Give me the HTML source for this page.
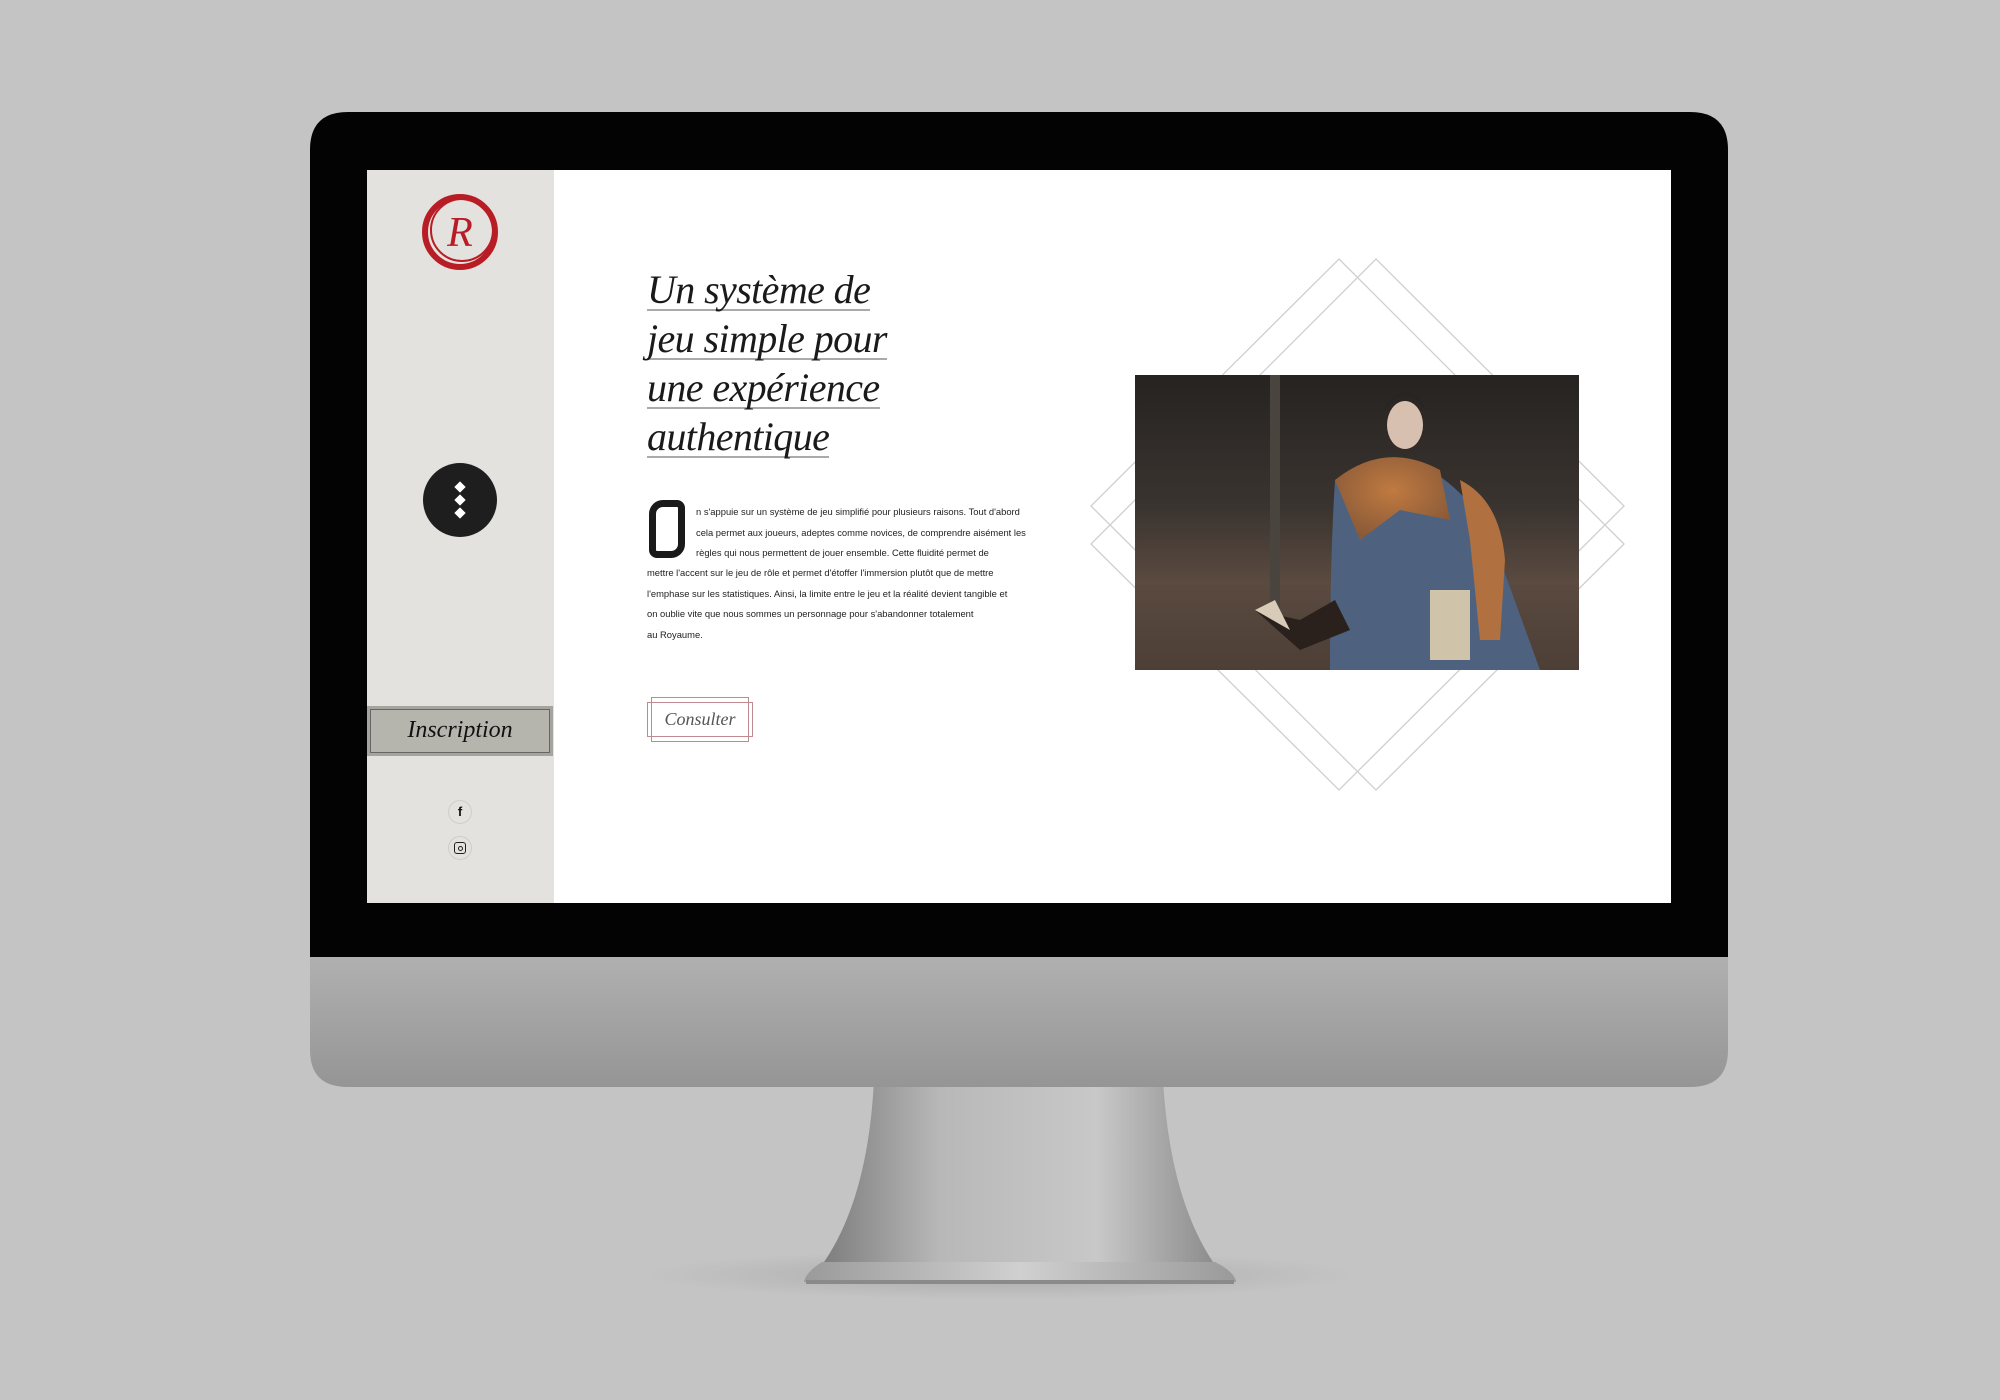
<!DOCTYPE html>
<html><head><meta charset="utf-8"><style>
*{margin:0;padding:0;box-sizing:border-box}
body{width:2000px;height:1400px;background:#c4c4c4;position:relative;overflow:hidden;font-family:"Liberation Sans",sans-serif}
.abs{position:absolute}
.h1{left:647px;top:270px;font-family:"Liberation Serif",serif;font-style:italic;font-size:40px;line-height:40px;color:#1a1a1a;letter-spacing:-0.6px}
.h1 span{display:inline-block;border-bottom:2px solid #aaa;line-height:38px;margin-bottom:8px}
.p{left:647px;top:560px;width:400px;font-size:9.4px;line-height:20.5px;color:#222}
</style></head><body>
<div class="abs" style="left:640px;top:1250px;width:720px;height:50px;border-radius:50%;background:radial-gradient(ellipse at center,rgba(140,140,140,.45),rgba(196,196,196,0) 70%)"></div>
<svg class="abs" style="left:0;top:0" width="2000" height="1400">
<defs>
<linearGradient id="ng" x1="0" x2="1"><stop offset="0" stop-color="#7d7d7d"/><stop offset=".3" stop-color="#b8b8b8"/><stop offset=".7" stop-color="#c8c8c8"/><stop offset="1" stop-color="#8c8c8c"/></linearGradient>
<linearGradient id="bg2" x1="0" x2="1"><stop offset="0" stop-color="#9a9a9a"/><stop offset=".5" stop-color="#d0d0d0"/><stop offset="1" stop-color="#9a9a9a"/></linearGradient>
<linearGradient id="chin" y1="0" y2="1" x1="0" x2="0"><stop offset="0" stop-color="#b0b0b0"/><stop offset="1" stop-color="#959595"/></linearGradient>
</defs>
<path d="M874 1080 L1163 1080 Q1170 1200 1215 1265 L822 1265 Q868 1200 874 1080Z" fill="url(#ng)"/>
<path d="M822 1262 L1215 1262 Q1235 1272 1236 1282 L804 1282 Q806 1272 822 1262Z" fill="url(#bg2)"/>
<rect x="806" y="1280" width="428" height="4" fill="#8a8a8a"/>
<path d="M348 112 H1690 Q1728 112 1728 150 V957 H310 V150 Q310 112 348 112Z" fill="#030303"/>
<path d="M310 957 H1728 V1050 Q1728 1087 1690 1087 H348 Q310 1087 310 1050Z" fill="url(#chin)"/>
</svg>
<div class="abs" style="left:367px;top:170px;width:1304px;height:733px;background:#fff;overflow:hidden">
  <div class="abs" style="left:0;top:0;width:187px;height:733px;background:#e4e2de"></div>
</div>
<svg class="abs" style="left:418px;top:190px" width="84" height="84">
<circle cx="42" cy="42" r="35" fill="none" stroke="#b81c25" stroke-width="6"/>
<circle cx="44" cy="40" r="31" fill="none" stroke="#b81c25" stroke-width="2"/>
<text x="42" y="56" text-anchor="middle" font-family="Liberation Serif,serif" font-style="italic" font-size="42" fill="#b81c25">R</text>
</svg>
<div class="abs" style="left:423px;top:463px;width:74px;height:74px;border-radius:50%;background:#1e1e1e"></div>
<div class="abs" style="left:456px;top:483px;width:8px;height:8px;background:#fff;transform:rotate(45deg)"></div>
<div class="abs" style="left:456px;top:496px;width:8px;height:8px;background:#fff;transform:rotate(45deg)"></div>
<div class="abs" style="left:456px;top:509px;width:8px;height:8px;background:#fff;transform:rotate(45deg)"></div>
<div class="abs" style="left:367px;top:706px;width:186px;height:50px;background:#b6b5ad;border:3px solid #a5a49e"></div>
<div class="abs" style="left:370px;top:709px;width:180px;height:44px;border:1.5px solid #666;font-family:'Liberation Serif',serif;font-size:24px;line-height:40px;text-align:center;color:#111;font-style:italic">Inscription</div>
<div class="abs" style="left:448px;top:800px;width:24px;height:24px;border-radius:50%;border:1px solid #d0cec9;font:bold 13px/22px 'Liberation Sans',sans-serif;text-align:center;color:#111">f</div>
<div class="abs" style="left:448px;top:836px;width:24px;height:24px;border-radius:50%;border:1px solid #d0cec9"></div>
<div class="abs" style="left:454px;top:842px;width:12px;height:12px;border-radius:3px;border:1.6px solid #222"></div>
<div class="abs" style="left:457.5px;top:845.5px;width:5px;height:5px;border-radius:50%;border:1.4px solid #222"></div>
<div class="abs h1"><span>Un système de</span><br><span>jeu simple pour</span><br><span>une expérience</span><br><span>authentique</span></div>
<div class="abs" style="left:649px;top:500px;width:36px;height:58px;border:7px solid #1a1a1a;border-radius:14px 8px 14px 8px"></div>
<div class="abs p" style="top:502px;left:696px;width:360px">n s'appuie sur un système de jeu simplifié pour plusieurs raisons. Tout d'abord<br>cela permet aux joueurs, adeptes comme novices, de comprendre aisément les<br>règles qui nous permettent de jouer ensemble. Cette fluidité permet de</div>
<div class="abs p" style="top:563px">mettre l'accent sur le jeu de rôle et permet d'étoffer l'immersion plutôt que de mettre<br>l'emphase sur les statistiques. Ainsi, la limite entre le jeu et la réalité devient tangible et<br>on oublie vite que nous sommes un personnage pour s'abandonner totalement<br>au Royaume.</div>
<div class="abs" style="left:647px;top:702px;width:106px;height:35px;border:1.5px solid #c08a90"></div>
<div class="abs" style="left:651px;top:697px;width:98px;height:45px;border:1.5px solid #c08a90"></div>
<div class="abs" style="left:647px;top:702px;width:106px;height:35px;font-family:'Liberation Serif',serif;font-style:italic;font-size:18px;line-height:34px;text-align:center;color:#555">Consulter</div>
<svg class="abs" style="left:0;top:0" width="2000" height="1400">
<polygon points="1339,259 1624,544 1376,790 1091,506" fill="none" stroke="#cfcfcf" stroke-width="1.3"/>
<polygon points="1376,259 1624,506 1339,790 1091,544" fill="none" stroke="#cfcfcf" stroke-width="1.3"/>
<defs>
<linearGradient id="ph" x1="0" y1="0" x2="0" y2="1"><stop offset="0" stop-color="#262320"/><stop offset=".45" stop-color="#3a3430"/><stop offset=".7" stop-color="#5a4a40"/><stop offset="1" stop-color="#4d3f36"/></linearGradient>
<radialGradient id="fur" cx=".5" cy=".4" r=".6"><stop offset="0" stop-color="#c07a40"/><stop offset="1" stop-color="#8a5a38"/></radialGradient>
</defs>
<rect x="1135" y="375" width="444" height="295" fill="url(#ph)"/>
<rect x="1270" y="375" width="10" height="250" fill="#4a443e"/>
<path d="M1335 480 Q1380 450 1430 470 Q1480 500 1500 560 L1540 670 L1330 670 Q1330 560 1335 480Z" fill="#4e6280"/>
<path d="M1335 480 Q1385 440 1440 470 L1450 520 L1400 510 L1360 540Z" fill="url(#fur)"/>
<path d="M1460 480 Q1500 500 1505 560 L1500 640 L1480 640 L1470 540Z" fill="#b07040"/>
<ellipse cx="1405" cy="425" rx="18" ry="24" fill="#d8c0b0"/>
<path d="M1385 410 Q1405 380 1425 410 Q1420 395 1405 392 Q1390 395 1385 410Z" fill="#2a2420"/>
<path d="M1255 610 L1300 620 L1335 600 L1350 630 L1300 650 Z" fill="#2a201c"/>
<path d="M1255 610 L1275 600 L1290 630 Z" fill="#d8ccb8"/>
<rect x="1430" y="590" width="40" height="70" fill="#cfc3aa"/>
</svg>
</body></html>
